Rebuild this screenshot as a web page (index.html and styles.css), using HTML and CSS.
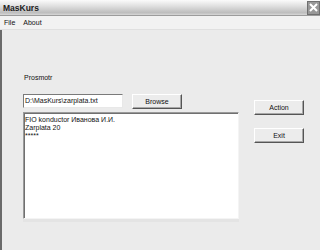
FILE: index.html
```html
<!DOCTYPE html>
<html lang="ru">
<head>
  <meta charset="UTF-8" />
  <title>MasKurs</title>
  <link rel="stylesheet" href="styles.css">
</head>
<body>
  <div class="window">
    <!-- Title bar -->
    <div class="titlebar">
      <span class="title">MasKurs</span>
      <span class="close">
        <svg width="11" height="11" viewBox="0 0 11 11">
          <path d="M2 2 L9 9 M9 2 L2 9" stroke="#fff" stroke-width="2" />
        </svg>
      </span>
    </div>

    <!-- Menu -->
    <div class="menubar">
      <span class="menu-item">File</span>
      <span class="menu-item">About</span>
    </div>

    <!-- Form -->
    <div class="form">
      <div class="left">
        <div class="label">Prosmotr</div>
        <div class="file-row">
          <div class="input">D:\MasKurs\zarplata.txt</div>
          <div class="btn">Browse</div>
        </div>
        <div class="memo">
          <div>FIO konductor Иванова И.И.</div>
          <div>Zarplata 20</div>
          <div>*****</div>
        </div>
      </div>
      <div class="right">
        <div class="btn">Action</div>
        <div class="btn">Exit</div>
      </div>
    </div>
  </div>
</body>
</html>
```

FILE: styles.css
```css
body {
  margin: 0;
  font-family: "Liberation Sans", Arial, sans-serif;
  font-size: 7px;
  color: #111;
}

.window {
  width: 320px;
  height: 250px;
  display: flex;
  flex-direction: column;
  background: #ebebeb;
}

/* Title bar */
.titlebar {
  height: 16px;
  display: flex;
  align-items: center;
  justify-content: space-between;
  padding-left: 3px;
  background: linear-gradient(#fbfbfb, #dcdcdc 45%, #bdbdbd 85%, #d8d8d8);
  border-bottom: 1px solid #9c9c9c;
  box-sizing: border-box;
}

.title {
  font-weight: bold;
  font-size: 8.5px;
  color: #222;
}

.close {
  width: 13px;
  height: 14px;
  display: flex;
  align-items: center;
  justify-content: center;
  background: #989898;
  border: 1px solid #6f6f6f;
  box-sizing: border-box;
}

/* Menu */
.menubar {
  height: 14px;
  display: flex;
  align-items: center;
  gap: 8px;
  padding-left: 4px;
  background: #f2f2f2;
  border-bottom: 1px solid #e0e0e0;
  box-sizing: border-box;
}

/* Form */
.form {
  flex: 1;
  display: flex;
  border-left: 2px solid #6a6a6a;
  padding-left: 21px;
}

.left {
  width: 216px;
  display: flex;
  flex-direction: column;
}

.label {
  margin-top: 43px;
  line-height: 9px;
  padding-left: 1px;
}

.file-row {
  margin-top: 12px;
  display: flex;
  gap: 9px;
}

.input {
  width: 100px;
  height: 14px;
  box-sizing: border-box;
  background: #fff;
  border: 1px solid;
  border-color: #7a7a7a #e8e8e8 #e8e8e8 #7a7a7a;
  padding-left: 1px;
  line-height: 12px;
  white-space: nowrap;
  overflow: hidden;
}

.btn {
  width: 50px;
  height: 15px;
  box-sizing: border-box;
  background: #ececec;
  border: 1px solid;
  border-color: #ffffff #555 #555 #ffffff;
  box-shadow: inset -1px -1px 0 #a8a8a8;
  text-align: center;
  line-height: 13px;
}

.memo {
  margin-top: 3px;
  height: 107px;
  box-sizing: border-box;
  background: #fff;
  border: 1px solid;
  border-color: #9a9a9a #f4f4f4 #f4f4f4 #9a9a9a;
  box-shadow: inset 1px 1px 0 #707070, 0 3px 0 #e4e4e4;
  padding: 3px 0 0 1px;
  line-height: 8px;
}

.right {
  display: flex;
  flex-direction: column;
  gap: 13px;
  margin-left: 15px;
  padding-top: 70px;
}
```
